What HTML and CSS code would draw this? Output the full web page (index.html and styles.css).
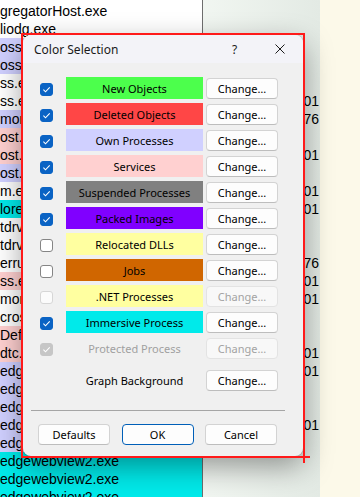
FILE: index.html
```html
<!DOCTYPE html>
<html lang="en">
<head>
    <meta charset="UTF-8">
    <meta name="viewport" content="width=device-width, initial-scale=1.0">
    <title>Color Selection</title>
    <link rel="stylesheet" href="styles.css">
</head>
<body>
    <div class="desktop">
        <!-- Lista de processos atrás do diálogo -->
        <div class="proc-list">
            <div class="proc">gregatorHost.exe</div>
            <div class="proc">liodg.exe</div>
            <div class="proc own">ossDeviceResume.exe</div>
            <div class="proc own">ossDeviceService.exe</div>
            <div class="proc">ss.exe</div>
            <div class="proc">ss.exe</div>
            <div class="proc own">mon.exe</div>
            <div class="proc svc">ost.exe</div>
            <div class="proc svc">ost.exe</div>
            <div class="proc own">ost.exe</div>
            <div class="proc">m.exe</div>
            <div class="proc imm">lorer.exe</div>
            <div class="proc">tdrvhost.exe</div>
            <div class="proc">tdrvhost.exe</div>
            <div class="proc">errupts</div>
            <div class="proc svc">ss.exe</div>
            <div class="proc">mon.exe</div>
            <div class="proc">crosoftEdgeUpdate.exe</div>
            <div class="proc svc">DefenderCoreService.exe</div>
            <div class="proc svc">dtc.exe</div>
            <div class="proc own">edge.exe</div>
            <div class="proc own">edge.exe</div>
            <div class="proc own">edge.exe</div>
            <div class="proc own">edge.exe</div>
            <div class="proc own">edge.exe</div>
            <div class="proc imm">edgewebview2.exe</div>
            <div class="proc imm">edgewebview2.exe</div>
            <div class="proc imm">edgewebview2.exe</div>
        </div>

        <!-- Coluna de CPU -->
        <div class="cpu-col">
            <div class="cpu"></div>
            <div class="cpu"></div>
            <div class="cpu"></div>
            <div class="cpu"></div>
            <div class="cpu"></div>
            <div class="cpu">0.01</div>
            <div class="cpu">1,676</div>
            <div class="cpu"></div>
            <div class="cpu">0.01</div>
            <div class="cpu"></div>
            <div class="cpu">0.01</div>
            <div class="cpu">0.01</div>
            <div class="cpu"></div>
            <div class="cpu"></div>
            <div class="cpu">3,276</div>
            <div class="cpu">0.01</div>
            <div class="cpu">0.01</div>
            <div class="cpu"></div>
            <div class="cpu"></div>
            <div class="cpu">0.01</div>
            <div class="cpu">0.01</div>
            <div class="cpu"></div>
            <div class="cpu"></div>
            <div class="cpu">0.01</div>
        </div>

        <div class="side-window"></div>

        <!-- Diálogo de seleção de cores -->
        <div class="dialog">
            <div class="title-bar">
                <span class="title">Color Selection</span>
                <span class="tb-btn">?</span>
                <span class="tb-btn">
                    <svg width="10" height="10" viewBox="0 0 10 10"><path d="M0.5 0.5L9.5 9.5M9.5 0.5L0.5 9.5" stroke="#1b1b1b" stroke-width="1" fill="none"/></svg>
                </span>
            </div>

            <div class="dialog-body">
                <div class="color-row">
                    <span class="check on"><svg width="13" height="13" viewBox="0 0 13 13"><path d="M3.4 6.7l2.1 2.1 4.2-4.4" stroke="#fff" stroke-width="1.1" fill="none"/></svg></span>
                    <span class="swatch sw-new">New Objects</span>
                    <button class="change">Change…</button>
                </div>
                <div class="color-row">
                    <span class="check on"><svg width="13" height="13" viewBox="0 0 13 13"><path d="M3.4 6.7l2.1 2.1 4.2-4.4" stroke="#fff" stroke-width="1.1" fill="none"/></svg></span>
                    <span class="swatch sw-deleted">Deleted Objects</span>
                    <button class="change">Change…</button>
                </div>
                <div class="color-row">
                    <span class="check on"><svg width="13" height="13" viewBox="0 0 13 13"><path d="M3.4 6.7l2.1 2.1 4.2-4.4" stroke="#fff" stroke-width="1.1" fill="none"/></svg></span>
                    <span class="swatch sw-own">Own Processes</span>
                    <button class="change">Change…</button>
                </div>
                <div class="color-row">
                    <span class="check on"><svg width="13" height="13" viewBox="0 0 13 13"><path d="M3.4 6.7l2.1 2.1 4.2-4.4" stroke="#fff" stroke-width="1.1" fill="none"/></svg></span>
                    <span class="swatch sw-services">Services</span>
                    <button class="change">Change…</button>
                </div>
                <div class="color-row">
                    <span class="check on"><svg width="13" height="13" viewBox="0 0 13 13"><path d="M3.4 6.7l2.1 2.1 4.2-4.4" stroke="#fff" stroke-width="1.1" fill="none"/></svg></span>
                    <span class="swatch sw-suspended">Suspended Processes</span>
                    <button class="change">Change…</button>
                </div>
                <div class="color-row">
                    <span class="check on"><svg width="13" height="13" viewBox="0 0 13 13"><path d="M3.4 6.7l2.1 2.1 4.2-4.4" stroke="#fff" stroke-width="1.1" fill="none"/></svg></span>
                    <span class="swatch sw-packed">Packed Images</span>
                    <button class="change">Change…</button>
                </div>
                <div class="color-row">
                    <span class="check"></span>
                    <span class="swatch sw-relocated">Relocated DLLs</span>
                    <button class="change">Change…</button>
                </div>
                <div class="color-row">
                    <span class="check"></span>
                    <span class="swatch sw-jobs">Jobs</span>
                    <button class="change">Change…</button>
                </div>
                <div class="color-row">
                    <span class="check disabled"></span>
                    <span class="swatch sw-net">.NET Processes</span>
                    <button class="change" disabled>Change…</button>
                </div>
                <div class="color-row">
                    <span class="check on"><svg width="13" height="13" viewBox="0 0 13 13"><path d="M3.4 6.7l2.1 2.1 4.2-4.4" stroke="#fff" stroke-width="1.1" fill="none"/></svg></span>
                    <span class="swatch sw-immersive">Immersive Process</span>
                    <button class="change">Change…</button>
                </div>
                <div class="color-row">
                    <span class="check on disabled"><svg width="13" height="13" viewBox="0 0 13 13"><path d="M3.4 6.7l2.1 2.1 4.2-4.4" stroke="#fff" stroke-width="1.1" fill="none"/></svg></span>
                    <span class="swatch muted">Protected Process</span>
                    <button class="change" disabled>Change…</button>
                </div>
                <div class="color-row graph-row">
                    <span class="check blank"></span>
                    <span class="swatch">Graph Background</span>
                    <button class="change">Change…</button>
                </div>
            </div>

            <div class="separator"></div>

            <div class="footer">
                <button class="btn">Defaults</button>
                <button class="btn default">OK</button>
                <button class="btn">Cancel</button>
            </div>
        </div>

        <!-- Moldura vermelha de seleção -->
        <div class="select-frame"></div>
    </div>
</body>
</html>
```

FILE: styles.css
```css
/* Geral */
body {
    margin: 0;
    font-family: "Liberation Sans", Arial, sans-serif;
    background-color: #fcf9e9;
}

.desktop {
    position: relative;
    display: flex;
    width: 360px;
    height: 497px;
    overflow: hidden;
}

/* Lista de processos */
.proc-list {
    width: 202px;
    padding-top: 2px;
    background-color: #fff;
    border-right: 1px solid #6e6e6e;
    font-size: 14px;
    line-height: 18px;
    color: #000;
}

.proc {
    height: 18px;
    white-space: nowrap;
    overflow: hidden;
}

.proc.own { background-color: #d0d0ff; }
.proc.svc { background-color: #ffd0d0; }
.proc.imm { background-color: #00eaea; }

/* Coluna de CPU */
.cpu-col {
    width: 117px;
    padding-top: 2px;
    background: linear-gradient(to right, #f1f6f1, #e3eae4);
    font-size: 14px;
    line-height: 18px;
    text-align: right;
    color: #000;
}

.cpu {
    height: 18px;
    padding-right: 1px;
}

.side-window {
    flex: 1;
    background-color: #fcf9e9;
}

/* Janela do diálogo */
.dialog {
    position: absolute;
    left: 23px;
    top: 35px;
    width: 280px;
    height: 421px;
    background-color: #f0f0f0;
    border-radius: 8px;
    box-shadow: 0 10px 30px rgba(0, 0, 0, 0.4), 0 0 0 1px rgba(0, 0, 0, 0.12);
    font-family: "Noto Sans", "Open Sans", sans-serif;
    font-size: 11px;
    color: #000;
    display: flex;
    flex-direction: column;
    overflow: hidden;
}

.title-bar {
    height: 28px;
    background-color: #f3f3f8;
    display: flex;
    align-items: center;
    padding-left: 11px;
    padding-right: 1px;
}

.title {
    flex: 1;
    font-size: 12px;
    color: #1b1b1b;
}

.tb-btn {
    width: 45px;
    height: 28px;
    display: flex;
    align-items: center;
    justify-content: center;
    font-size: 12px;
    color: #1b1b1b;
}

/* Linhas de cores */
.dialog-body {
    padding: 14px 0 0 17px;
    display: flex;
    flex-direction: column;
    gap: 4px;
}

.color-row {
    display: flex;
    align-items: center;
    height: 22px;
}

.graph-row {
    margin-top: 6px;
}

.check {
    width: 13px;
    height: 13px;
    box-sizing: border-box;
    border: 1px solid #858585;
    border-radius: 3px;
    background-color: #fff;
    margin-right: 13px;
    margin-top: 2px;
    display: flex;
}

.check.on {
    background-color: #0a63c4;
    border-color: #0a63c4;
}

.check.on svg {
    margin: -1px;
}

.check.disabled {
    border-color: #d6d6d6;
    background-color: #fbfbfb;
}

.check.on.disabled {
    background-color: #c6c6c6;
    border-color: #c6c6c6;
}

.check.blank {
    visibility: hidden;
}

.swatch {
    width: 137px;
    height: 22px;
    display: flex;
    align-items: center;
    justify-content: center;
    white-space: nowrap;
    overflow: hidden;
}

.swatch.muted { color: #a0a0a0; }

.sw-new { background-color: #4cff4c; }
.sw-deleted { background-color: #ff4646; }
.sw-own { background-color: #d0d0ff; }
.sw-services { background-color: #ffd0d0; }
.sw-suspended { background-color: #808080; }
.sw-packed { background-color: #8000ff; }
.sw-relocated { background-color: #ffffa0; }
.sw-jobs { background-color: #d06600; }
.sw-net { background-color: #ffffa0; }
.sw-immersive { background-color: #00eaea; }

/* Botões */
.change,
.btn {
    font-family: "Noto Sans", "Open Sans", sans-serif;
    font-size: 11px;
    color: #000;
    background-color: #fdfdfd;
    border: 1px solid #d3d3d3;
    border-bottom-color: #bdbdbd;
    border-radius: 4px;
    padding: 0;
    height: 21px;
}

.change {
    width: 72px;
    margin-left: 3px;
}

.change:disabled {
    color: #a3a3a3;
    background-color: #f8f8f8;
    border-color: #e3e3e3;
}

.separator {
    height: 1px;
    background-color: #a5a5a5;
    margin: 19px 18px 0 8px;
}

.footer {
    display: flex;
    gap: 11.5px;
    padding: 13px 0 0 15px;
}

.btn {
    width: 72px;
}

.btn.default {
    border: 1px solid #005fb8;
}

/* Moldura de seleção */
.select-frame {
    position: absolute;
    left: 21px;
    top: 33px;
    width: 280px;
    height: 421px;
    border: 2px solid #ff1a1a;
}

.select-frame::before {
    content: "";
    position: absolute;
    right: -7px;
    bottom: -2px;
    width: 7px;
    height: 2px;
    background-color: #ff1a1a;
}

.select-frame::after {
    content: "";
    position: absolute;
    right: -2px;
    bottom: -7px;
    width: 2px;
    height: 7px;
    background-color: #ff1a1a;
}
```
